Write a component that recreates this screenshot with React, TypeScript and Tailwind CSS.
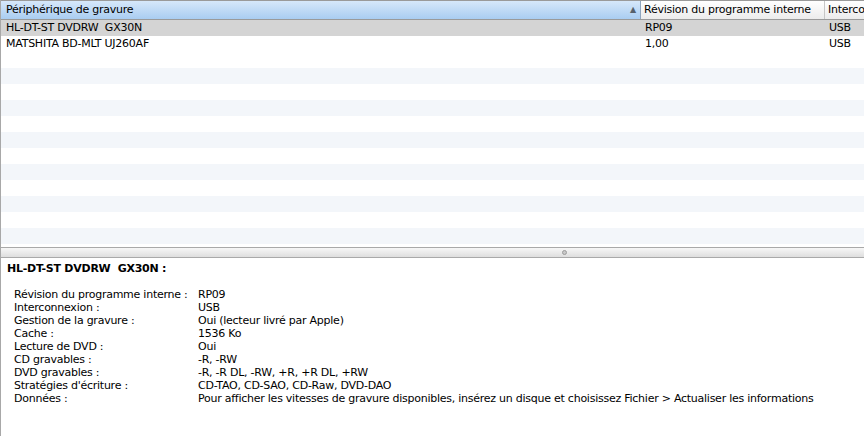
const font = { fontFamily: '"DejaVu Sans", "Liberation Sans", sans-serif' };

const drives = [
  { name: "HL-DT-ST DVDRW  GX30N", rev: "RP09", bus: "USB" },
  { name: "MATSHITA BD-MLT UJ260AF", rev: "1,00", bus: "USB" },
];

const details: [string, string][] = [
  ["Révision du programme interne :", "RP09"],
  ["Interconnexion :", "USB"],
  ["Gestion de la gravure :", "Oui (lecteur livré par Apple)"],
  ["Cache :", "1536 Ko"],
  ["Lecture de DVD :", "Oui"],
  ["CD gravables :", "-R, -RW"],
  ["DVD gravables :", "-R, -R DL, -RW, +R, +R DL, +RW"],
  ["Stratégies d'écriture :", "CD-TAO, CD-SAO, CD-Raw, DVD-DAO"],
  ["Données :", "Pour afficher les vitesses de gravure disponibles, insérez un disque et choisissez Fichier > Actualiser les informations"],
];

function Row({ name, rev, bus, className }: { name?: string; rev?: string; bus?: string; className: string }) {
  return (
    <div className={`flex h-4 items-center whitespace-pre text-[11px] leading-4 text-black ${className}`}>
      <div className="w-[640px] shrink-0 overflow-hidden pl-[5px]">{name}</div>
      <div className="w-[184px] shrink-0 overflow-hidden pl-1">{rev}</div>
      <div className="flex-1 overflow-hidden pl-1">{bus}</div>
    </div>
  );
}

export default function App() {
  const empty = Array.from({ length: 12 }, (_, i) => i);

  return (
    <div
      className="flex h-[436px] w-[864px] flex-col overflow-hidden border-l border-[#a8a8a8] bg-white tracking-[-0.25px]"
      style={font}
    >
      {/* table */}
      <div className="flex h-[247px] shrink-0 flex-col overflow-hidden">
        <div className="flex h-5 shrink-0 border-t border-b border-[#9a9a9a] text-[11px] text-black">
          <div className="flex w-[640px] shrink-0 items-center justify-between border-r border-[#8fa6be] bg-gradient-to-b from-[#d6e8fa] to-[#a9cdf1] pl-[5px] pr-[4px]">
            <span>Périphérique de gravure</span>
            <span className="text-[8px] text-[#56606b]">▲</span>
          </div>
          <div className="flex w-[184px] shrink-0 items-center border-r border-[#c6c6c6] bg-gradient-to-b from-white to-[#ececec] pl-[3px]">
            Révision du programme interne
          </div>
          <div className="flex flex-1 items-center overflow-hidden whitespace-nowrap bg-gradient-to-b from-white to-[#ececec] pl-[3px]">
            Interco
          </div>
        </div>
        <Row {...drives[0]} className="bg-[#d4d4d4]" />
        <Row {...drives[1]} className="bg-white" />
        {empty.map((i) => (
          <Row key={i} className={i % 2 === 1 ? "bg-[#f3f6fa]" : "bg-white"} />
        ))}
      </div>

      {/* splitter */}
      <div className="relative h-[11px] shrink-0 border-y border-[#a9a9a9] bg-gradient-to-b from-[#f7f7f7] to-[#dedede]">
        <div className="absolute left-[561px] top-[2px] h-[5px] w-[5px] rounded-full border border-[#9c9c9c] bg-[#c8c8c8]" />
      </div>

      {/* detail */}
      <div className="flex-1 pl-[6px] pt-[4px] text-[11px] leading-[13px] text-black">
        <div className="whitespace-pre font-bold">HL-DT-ST DVDRW  GX30N :</div>
        <div className="mt-[13px] pl-[7px]">
          {details.map(([label, value]) => (
            <div key={label} className="flex whitespace-nowrap">
              <div className="w-[184px] shrink-0">{label}</div>
              <div>{value}</div>
            </div>
          ))}
        </div>
      </div>
    </div>
  );
}
